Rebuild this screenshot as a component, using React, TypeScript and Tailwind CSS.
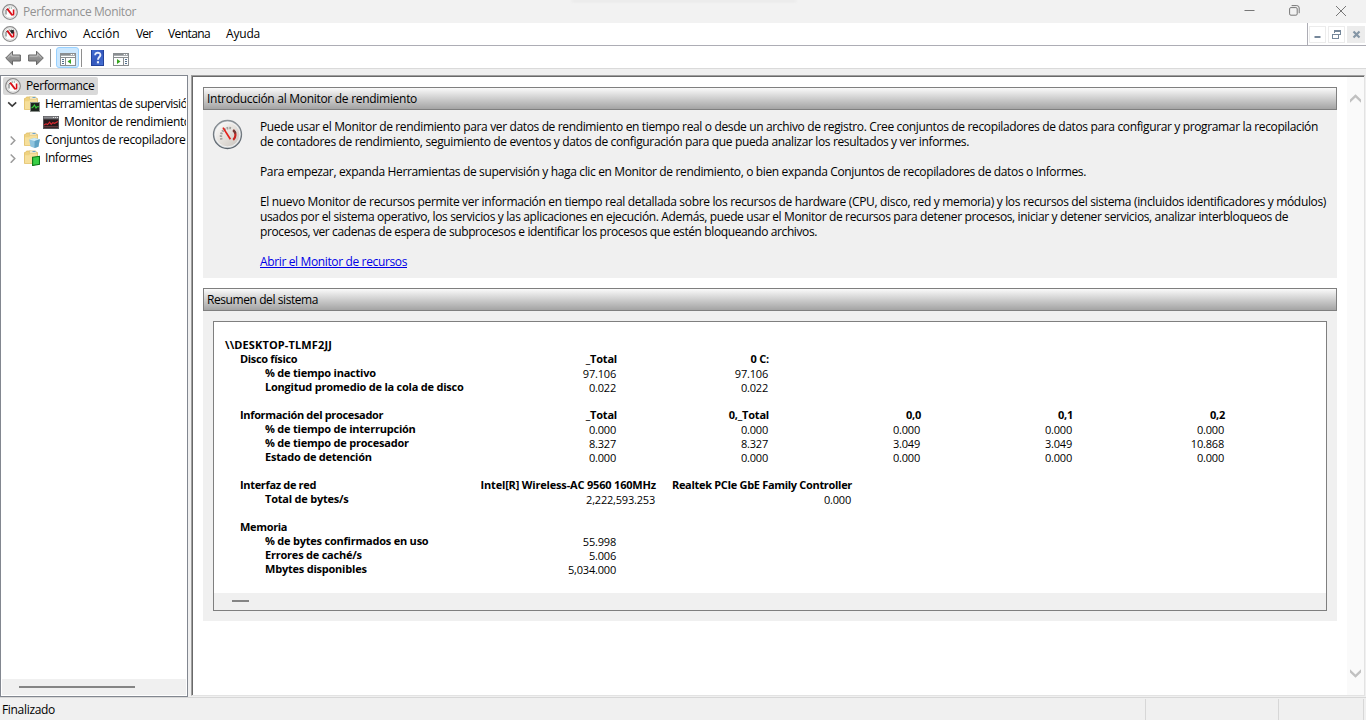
import type { ReactNode } from "react";

function GaugeIcon({ dark = false }: { dark?: boolean }) {
  return (
    <svg width="16" height="16" viewBox="0 0 16 16" className="shrink-0">
      <circle cx="8" cy="8" r="7.3" fill="#fdfdfd" stroke="#8c8c8c" strokeWidth="1.3" />
      <circle cx="8" cy="8" r="6" fill="none" stroke="#cfcfcf" strokeWidth="0.8" />
      <path d="M4 10.5V6l1.2-1.4" fill="none" stroke="#4b5150" strokeWidth="0.9" />
      <path d="M6.6 4h4" stroke="#6f8a7c" strokeWidth="1.1" strokeDasharray="1.4 0.7" />
      <path d="M5.2 4.6l5 6.6" stroke="#d90f18" strokeWidth="1.9" />
      <path d="M11.6 5.6v4.6l-1.2 1.2" fill="none" stroke="#d90f18" strokeWidth="1.6" />
      {dark && <path d="M7.6 4.6l4.2-0.8v3.4l-2 .6z" fill="#26292b" />}
    </svg>
  );
}

function LargeGauge() {
  return (
    <svg width="32" height="32" viewBox="0 0 32 32" className="shrink-0">
      <defs>
        <linearGradient id="dial" x1="0" y1="0" x2="1" y2="1">
          <stop offset="0" stopColor="#ffffff" />
          <stop offset="0.55" stopColor="#e2ded9" />
          <stop offset="1" stopColor="#c8c3bd" />
        </linearGradient>
        <linearGradient id="rim" x1="0" y1="0" x2="0" y2="1">
          <stop offset="0" stopColor="#8b9196" />
          <stop offset="1" stopColor="#59626b" />
        </linearGradient>
      </defs>
      <circle cx="15.5" cy="15.5" r="14" fill="#cfd4d8" stroke="url(#rim)" strokeWidth="1.3" />
      <circle cx="15.5" cy="15.5" r="12.4" fill="url(#dial)" stroke="#f8f8f8" strokeWidth="0.8" />
      <path d="M9.6 20.6A8.4 8.4 0 0 1 20 9.4" fill="none" stroke="#a3a19e" strokeWidth="2.4" strokeDasharray="1.7 1" />
      <path d="M21.2 11.2c3 2.4 3 7 0 9.6" fill="none" stroke="#c9251f" strokeWidth="2.2" />
      <path d="M21.2 11.2c1.2.9 1.9 2 2.2 3.4" fill="none" stroke="#6f3b38" strokeWidth="2.2" />
      <path d="M11 8.6l7.4 11.6" stroke="#e3201b" strokeWidth="1.7" />
    </svg>
  );
}

function ArrowIcon({ flip = false }: { flip?: boolean }) {
  return (
    <svg width="16" height="16" viewBox="0 0 16 16" className={flip ? "-scale-x-100" : ""}>
      <defs>
        <linearGradient id="arrow" x1="0" y1="0" x2="0" y2="1">
          <stop offset="0" stopColor="#b5b5b5" />
          <stop offset="0.5" stopColor="#929292" />
          <stop offset="1" stopColor="#7b7b7b" />
        </linearGradient>
      </defs>
      <path d="M0.7 8L7.5 1.2V5H15.4V11H7.5V14.8Z" fill="url(#arrow)" stroke="#676767" strokeWidth="1" />
      <path d="M2.6 7.8L6.6 4V6.2H14.2" fill="none" stroke="#c8c8c8" strokeWidth="0.8" />
    </svg>
  );
}

function PaneIcon({ right = false }: { right?: boolean }) {
  return (
    <svg width="16" height="13" viewBox="0 0 16 13" shapeRendering="crispEdges">
      <rect x="0.5" y="0.5" width="15" height="12" fill="#fdfdfd" stroke="#8a8e91" />
      <rect x="1" y="1" width="14" height="2" fill="#a9adb0" />
      <path d="M1 1.5h9" stroke="#8a8e91" />
      <path d="M11 1.5h1M13 1.5h1" stroke="#fff" />
      <path d="M0 4.5h16" stroke="#8a8e91" />
      <path d={right ? "M10.5 5v7" : "M5.5 5v7"} stroke="#8a8e91" />
      <path d={right ? "M12 6.5h2M12 8.5h2M12 10.5h2" : "M2 6.5h2M2 8.5h2M2 10.5h2"} stroke="#52708e" />
      <path d={right ? "M4 6v5l3.5-2.5z" : "M11 6v5L7.5 8.5z"} fill="#35a51d" shapeRendering="auto" />
    </svg>
  );
}

function HelpIcon() {
  return (
    <svg width="13" height="16" viewBox="0 0 13 16">
      <defs>
        <linearGradient id="help" x1="0" y1="0" x2="1" y2="1">
          <stop offset="0" stopColor="#4470d3" />
          <stop offset="0.5" stopColor="#3357bd" />
          <stop offset="1" stopColor="#4b77d8" />
        </linearGradient>
      </defs>
      <rect width="13" height="16" fill="url(#help)" />
      <path d="M0.5 0v16M12.5 0v16M0 15.5h13" stroke="#23429b" />
      <path d="M4.2 5.2C4 1.9 9.7 2 9.4 5.1 9.3 7 7 7.2 7 9.7" fill="none" stroke="#e8eefb" strokeWidth="1.9" />
      <rect x="5.9" y="11.2" width="2.1" height="2.1" fill="#e8eefb" />
    </svg>
  );
}

function FolderIcon({ children }: { children: ReactNode }) {
  return (
    <svg width="16" height="16" viewBox="0 0 16 16" className="shrink-0">
      <path d="M0.5 13.5v-11h1l1-1.5h4l1 1.5h6v11z" fill="#efd27f" stroke="#dfbd63" strokeWidth="0.8" />
      <path d="M5.5 3.2V0.8h6l1 1.2v1.2z" fill="#f6edcf" stroke="#d9c07a" strokeWidth="0.6" />
      <path d="M8.5 1.5h3" stroke="#5a9bd0" strokeWidth="0.9" />
      <path d="M1 5.2h4.2l1-1.4H13v9.4H1z" fill="#f6df9b" />
      {children}
    </svg>
  );
}

const chartBadge = (
  <>
    <rect x="6.5" y="6.5" width="9" height="9" fill="#1d2620" stroke="#8a8f8b" />
    <path d="M7.5 12l1.5-1 1.5-2 1.5 3 1-1.2h2" fill="none" stroke="#39d33d" strokeWidth="1.1" />
  </>
);
const cubeBadge = (
  <>
    <path d="M5.2 7.5l5-1.4 5.6 1.2-1.4 7.4-3.9 1.2-4-1.4z" fill="#8fc4de" />
    <path d="M5.2 7.5l5-1.4 5.6 1.2-5.2 1.6z" fill="#cfeaf5" />
    <path d="M10.6 8.9l5.2-1.6-1.4 7.4-3.9 1.2z" fill="#5fa2c4" />
  </>
);
const reportBadge = (
  <path d="M8.6 7.3l6.9-1v8l-6.9 1.2z" fill="#39cf45" stroke="#0b7616" strokeWidth="1.1" />
);

function MonitorIcon() {
  return (
    <svg width="16" height="13" viewBox="0 0 16 13" className="shrink-0">
      <rect width="16" height="13" fill="#555558" />
      <rect x="0.5" y="0.5" width="15" height="2" fill="#8b8c90" />
      <path d="M10 1.5h1M12 1.5h1M14 1.5h1" stroke="#e3e3e3" />
      <rect x="1" y="3.5" width="14" height="8.5" fill="#26191b" />
      <path d="M1 9l2-1.2 1.6.8 2-2.4 1.6 2.2 1.6-1.7 1.8.6 3.4-1.7" fill="none" stroke="#de2a31" strokeWidth="1.1" />
      <path d="M1 10.8h14" stroke="#8e5558" strokeWidth="0.8" />
    </svg>
  );
}

function Chevron({ open = false }: { open?: boolean }) {
  return (
    <svg width="10" height="10" viewBox="0 0 10 10" className="shrink-0">
      {open ? (
        <path d="M1.2 3.4L5.2 7.2L9.2 3.4" fill="none" stroke="#3a3a3a" strokeWidth="1.6" />
      ) : (
        <path d="M3.7 1.4L7.8 5.6L3.7 9.8" fill="none" stroke="#9c9c9c" strokeWidth="1.5" />
      )}
    </svg>
  );
}

function ScrollChevron({ down = false }: { down?: boolean }) {
  return (
    <svg width="11" height="9" viewBox="0 0 11 9" className={down ? "-scale-y-100" : ""}>
      <path d="M0 5.6L5.5 0.2L11 5.6V8.8L5.5 3.6L0 8.8Z" fill="#c1c1c1" />
    </svg>
  );
}

function SectionHeader({ children }: { children: ReactNode }) {
  return (
    <div className="flex h-[23px] items-center border border-[#7f7f7f] bg-linear-to-b from-[#fafafa] to-[#a4a4a4] pl-[3px]">
      {children}
    </div>
  );
}

type Row = { label: string; level: 0 | 1 | 2; cells?: string[]; wide?: boolean };

const rows: (Row | null)[] = [
  { label: "\\\\DESKTOP-TLMF2JJ", level: 0 },
  { label: "Disco físico", level: 1, cells: ["_Total", "0 C:"] },
  { label: "% de tiempo inactivo", level: 2, cells: ["97.106", "97.106"] },
  { label: "Longitud promedio de la cola de disco", level: 2, cells: ["0.022", "0.022"] },
  null,
  { label: "Información del procesador", level: 1, cells: ["_Total", "0,_Total", "0,0", "0,1", "0,2"] },
  { label: "% de tiempo de interrupción", level: 2, cells: ["0.000", "0.000", "0.000", "0.000", "0.000"] },
  { label: "% de tiempo de procesador", level: 2, cells: ["8.327", "8.327", "3.049", "3.049", "10.868"] },
  { label: "Estado de detención", level: 2, cells: ["0.000", "0.000", "0.000", "0.000", "0.000"] },
  null,
  {
    label: "Interfaz de red",
    level: 1,
    wide: true,
    cells: ["Intel[R] Wireless-AC 9560 160MHz", "Realtek PCIe GbE Family Controller"],
  },
  { label: "Total de bytes/s", level: 2, wide: true, cells: ["2,222,593.253", "0.000"] },
  null,
  { label: "Memoria", level: 1 },
  { label: "% de bytes confirmados en uso", level: 2, cells: ["55.998"] },
  { label: "Errores de caché/s", level: 2, cells: ["5.006"] },
  { label: "Mbytes disponibles", level: 2, cells: ["5,034.000"] },
];

const indent = ["pl-[11px] tracking-[0.12px]", "pl-[26px] tracking-[-0.33px]", "pl-[51px] tracking-[-0.22px]"];

function SummaryRow({ row }: { row: Row | null }) {
  if (!row) return <div className="h-[14px]" />;
  const value = row.level === 2;
  return (
    <div className="flex h-[14px] whitespace-nowrap text-[11px] leading-[14px]">
      <div className={`w-[251px] shrink-0 font-bold ${indent[row.level]}`}>{row.label}</div>
      {row.cells?.map((cell, i) => (
        <div
          key={i}
          className={`shrink-0 text-right ${row.wide ? (i === 0 ? "w-[191px]" : "w-[196px]") : "w-[152px]"} ${
            value ? "pt-px pr-px tracking-[-0.2px]" : "font-bold"
          } ${value ? "" : row.wide ? (i === 0 ? "tracking-[-0.18px]" : "tracking-[-0.315px]") : "tracking-[-0.2px]"}`}
        >
          {cell}
        </div>
      ))}
    </div>
  );
}

export default function App() {
  return (
    <div className="flex h-[720px] w-[1366px] flex-col overflow-hidden bg-[#f0f0f0] font-['Open_Sans','Noto_Sans',sans-serif] text-[12px] leading-[15px] text-black">
      <header className="relative flex h-[23px] shrink-0 items-center bg-[#f2f2f2] pl-[2px]">
        <GaugeIcon />
        <span className="ml-[5px] tracking-[-0.4px] text-[#929292]">Performance Monitor</span>
        <div className="absolute top-0 left-[572px] h-[2px] w-[224px] bg-[#e7e7e7] blur-[1px]" />
        <div className="ml-auto flex items-center pr-[19px] pb-[2px] text-[#777]">
          <svg width="11" height="11" viewBox="0 0 11 11"><path d="M0.5 5.5h10" stroke="currentColor" /></svg>
          <svg width="11" height="11" viewBox="0 0 11 11" className="ml-[34px]" fill="none" stroke="currentColor">
            <rect x="0.6" y="2.6" width="7.6" height="7.6" rx="1.3" />
            <path d="M2.6 0.6h5.2a2.4 2.4 0 0 1 2.4 2.4v5.2" />
          </svg>
          <svg width="12" height="12" viewBox="0 0 12 12" className="ml-[35px]" stroke="currentColor"><path d="M1 1l10 10M11 1L1 11" /></svg>
        </div>
      </header>

      <nav className="flex h-[23px] shrink-0 items-stretch bg-white">
        <div className="flex flex-1 items-center border-r border-b border-[#adadb5] pl-[2px]">
          <GaugeIcon dark />
          <div className="flex pb-px">
            <span className="ml-[8px] w-[57px] tracking-[-0.12px]">Archivo</span>
            <span className="w-[53px]">Acción</span>
            <span className="w-[32px] tracking-[-0.8px]">Ver</span>
            <span className="w-[58px] tracking-[-0.58px]">Ventana</span>
            <span className="tracking-[-0.19px]">Ayuda</span>
          </div>
        </div>
        <div className="flex w-[58px] items-center gap-[2px] border-b border-[#adadb5] pl-px">
          <div className="flex h-[17px] w-[17px] items-center justify-center border border-[#ececec] text-[#75879a]">
            <svg width="9" height="9"><path d="M1.5 7h6" stroke="currentColor" strokeWidth="2" /></svg>
          </div>
          <div className="flex h-[17px] w-[17px] items-center justify-center border border-[#ececec] text-[#75879a]">
            <svg width="9" height="9" fill="none" stroke="currentColor" shapeRendering="crispEdges">
              <path d="M2.5 3V0.5h6v4H7M2 1h7M0.5 4.5h6v4h-6zM0 4h7" />
            </svg>
          </div>
          <div className="flex h-[17px] w-[18px] items-center justify-center bg-[#ececec] text-[#8596a6]">
            <svg width="9" height="9"><path d="M1.5 1.5l6 6M7.5 1.5l-6 6" stroke="currentColor" strokeWidth="2.2" /></svg>
          </div>
        </div>
      </nav>

      <div className="flex h-[23px] shrink-0 items-start border-b border-[#dadada] bg-white pl-[5px]">
        <div className="flex h-[22px] items-center gap-[7px] pt-[2px]">
          <ArrowIcon />
          <ArrowIcon flip />
        </div>
        <div className="mt-[3px] ml-[6px] h-[18px] w-px bg-[#8e8e8e]" />
        <div className="mt-px ml-[5px] flex h-[21px] w-[23px] items-center justify-center rounded-[3px] border border-[#99d1ff] bg-[#cce8ff] pt-[3px]">
          <PaneIcon />
        </div>
        <div className="mt-[3px] ml-[2px] h-[18px] w-px bg-[#8e8e8e]" />
        <div className="mt-[4px] ml-[9px]"><HelpIcon /></div>
        <div className="mt-[7px] ml-[9px]"><PaneIcon right /></div>
      </div>

      <main className="flex h-[628px] shrink-0 pt-[6px]">
        <aside className="flex w-[188px] shrink-0 flex-col overflow-hidden border border-[#828790] bg-white">
          <div className="flex flex-1 flex-col overflow-hidden whitespace-nowrap pt-px">
            <div className="ml-[2px] flex h-[18px] w-[95px] items-center rounded-[2px] bg-[#d9d9d9] pl-[2px]">
              <GaugeIcon />
              <span className="ml-[5px] pb-[2px] tracking-[-0.4px]">Performance</span>
            </div>
            <div className="flex h-[18px] items-center pl-[6px]">
              <Chevron open />
              <div className="ml-[7px]"><FolderIcon>{chartBadge}</FolderIcon></div>
              <span className="ml-[5px] w-[141px] shrink-0 overflow-hidden pb-[2px] tracking-[-0.46px]">Herramientas de supervisión</span>
            </div>
            <div className="flex h-[18px] items-center pl-[42px]">
              <MonitorIcon />
              <span className="ml-[5px] w-[122px] shrink-0 overflow-hidden pb-[2px] tracking-[-0.34px]">Monitor de rendimiento</span>
            </div>
            <div className="flex h-[18px] items-center pl-[6px]">
              <Chevron />
              <div className="ml-[7px]"><FolderIcon>{cubeBadge}</FolderIcon></div>
              <span className="ml-[5px] w-[141px] shrink-0 overflow-hidden pb-[2px] tracking-[-0.31px]">Conjuntos de recopiladores</span>
            </div>
            <div className="flex h-[18px] items-center pl-[6px]">
              <Chevron />
              <div className="ml-[7px]"><FolderIcon>{reportBadge}</FolderIcon></div>
              <span className="ml-[5px] pb-[2px] tracking-[-0.43px]">Informes</span>
            </div>
          </div>
          <div className="mx-px mb-px flex h-[16px] items-center bg-[#f0f0f0] pl-[17px]">
            <div className="h-[2px] w-[116px] bg-[#858585]" />
          </div>
        </aside>

        <section className="ml-[3px] flex h-[621px] w-[1174px] shrink-0 border border-t-[#a0a0a0] border-r-[#e3e3e3] border-b-[#e3e3e3] border-l-[#a0a0a0]">
          <div className="flex flex-1 border-t border-l border-[#696969] bg-white">
            <div className="flex flex-1 flex-col gap-[10px] pt-[10px] pr-[10px] pl-[10px]">
              <article className="h-[191px] bg-[#f0f0f0]">
                <SectionHeader>
                  <span className="tracking-[-0.29px]">Introducción al Monitor de rendimiento</span>
                </SectionHeader>
                <div className="flex pt-[9px] pl-[9px]">
                  <LargeGauge />
                  <div className="ml-[16px] whitespace-nowrap">
                    <p className="tracking-[-0.359px]">Puede usar el Monitor de rendimiento para ver datos de rendimiento en tiempo real o desde un archivo de registro. Cree conjuntos de recopiladores de datos para configurar y programar la recopilación</p>
                    <p className="tracking-[-0.355px]">de contadores de rendimiento, seguimiento de eventos y datos de configuración para que pueda analizar los resultados y ver informes.</p>
                    <p className="mt-[15px] tracking-[-0.358px]">Para empezar, expanda Herramientas de supervisión y haga clic en Monitor de rendimiento, o bien expanda Conjuntos de recopiladores de datos o Informes.</p>
                    <p className="mt-[15px] tracking-[-0.333px]">El nuevo Monitor de recursos permite ver información en tiempo real detallada sobre los recursos de hardware (CPU, disco, red y memoria) y los recursos del sistema (incluidos identificadores y módulos)</p>
                    <p className="tracking-[-0.364px]">usados por el sistema operativo, los servicios y las aplicaciones en ejecución. Además, puede usar el Monitor de recursos para detener procesos, iniciar y detener servicios, analizar interbloqueos de</p>
                    <p className="tracking-[-0.391px]">procesos, ver cadenas de espera de subprocesos e identificar los procesos que estén bloqueando archivos.</p>
                    <p className="mt-[15px] tracking-[-0.364px]"><a className="text-[#0000e6] underline" href="#">Abrir el Monitor de recursos</a></p>
                  </div>
                </div>
              </article>

              <article className="h-[333px] bg-[#f0f0f0]">
                <SectionHeader>
                  <span className="tracking-[-0.42px]">Resumen del sistema</span>
                </SectionHeader>
                <div className="mx-[10px] mt-[10px] flex h-[290px] flex-col border border-[#7f7f7f] bg-white">
                  <div className="flex-1 pt-[16px]">
                    {rows.map((row, i) => (
                      <SummaryRow key={i} row={row} />
                    ))}
                  </div>
                  <div className="flex h-[17px] items-start bg-[#f0f0f0] pt-[7px] pl-[18px]">
                    <div className="h-[2px] w-[17px] bg-[#858585]" />
                  </div>
                </div>
              </article>
            </div>
            <div className="flex w-[17px] flex-col items-center justify-between bg-[#fafafa] pt-[17px] pb-[17px]">
              <ScrollChevron />
              <ScrollChevron down />
            </div>
          </div>
        </section>
      </main>

      <footer className="flex h-[23px] shrink-0 items-stretch border-t border-[#d7d7d7] pt-px">
        <div className="flex w-[1146px] items-center border-r border-[#d7d7d7] pl-[2px] tracking-[-0.32px]">Finalizado</div>
        <div className="w-[133px] border-r border-[#d7d7d7]" />
        <div className="w-[85px] border-r border-[#d7d7d7]" />
      </footer>
    </div>
  );
}
